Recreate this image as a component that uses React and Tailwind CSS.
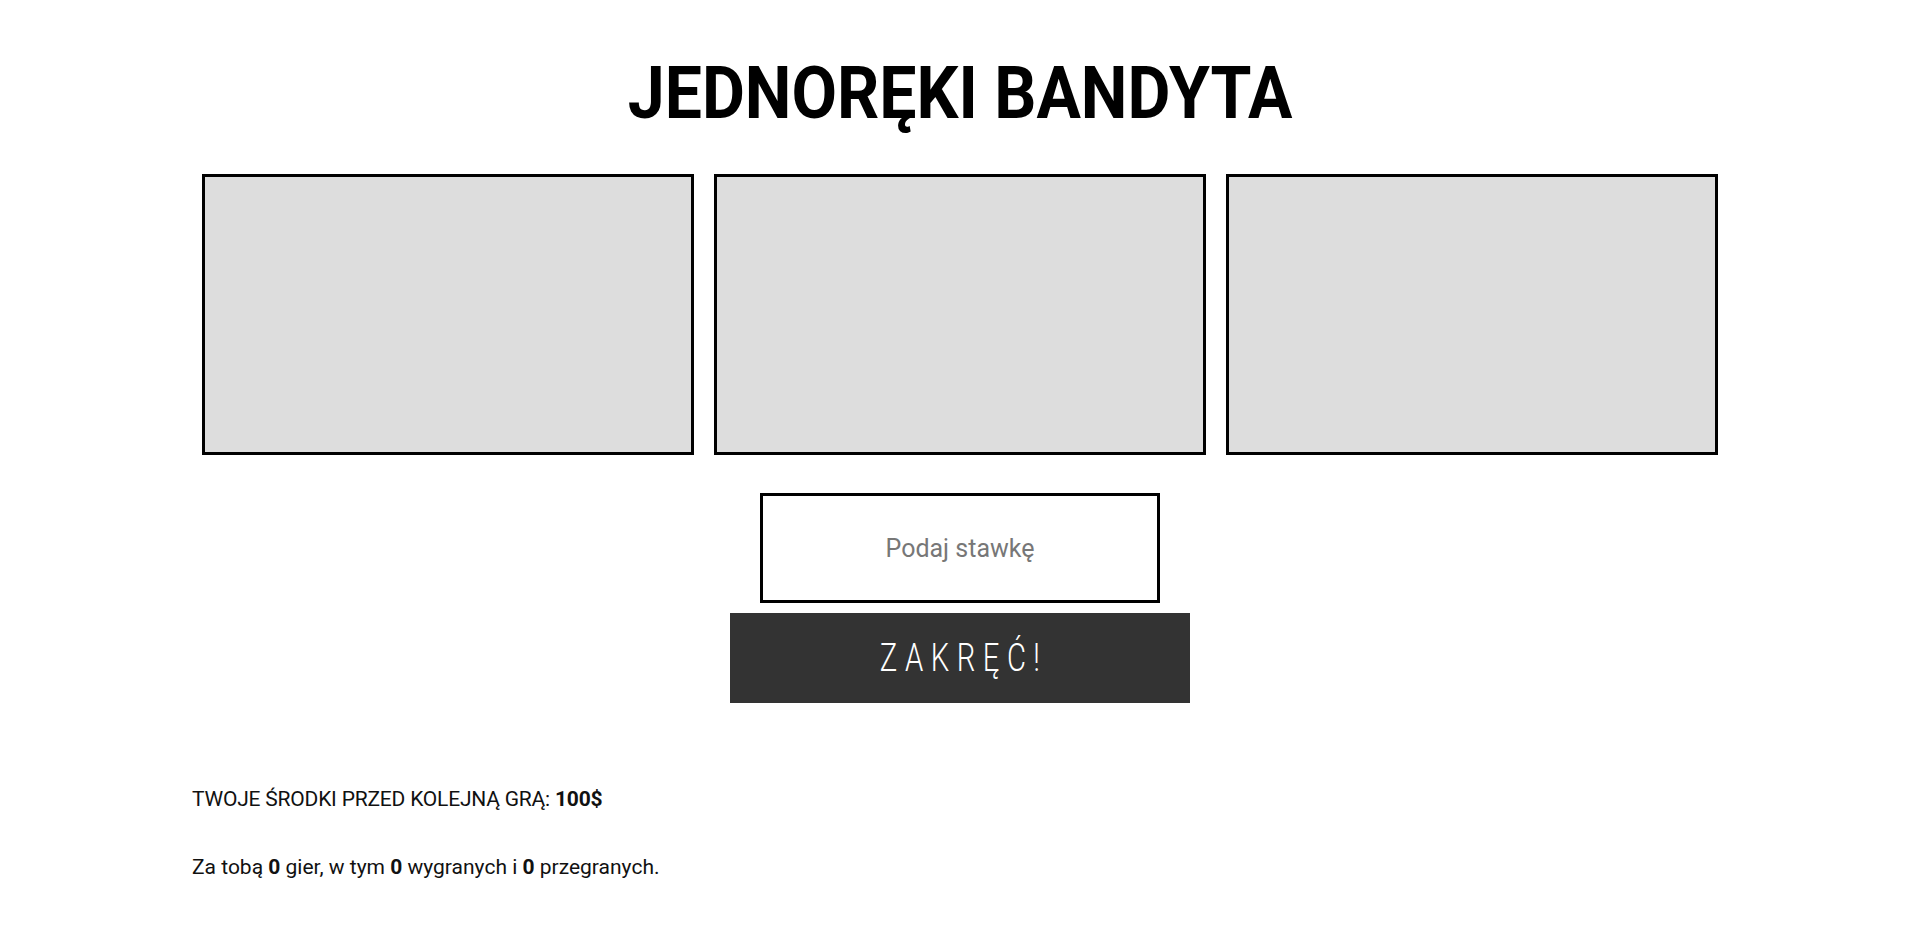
import React from "react";

export default function App() {
  const font = { fontFamily: "Roboto, 'Liberation Sans', sans-serif" };
  return (
    <div className="min-h-screen bg-white" style={font}>
      <div className="w-[1536px] mx-auto">
        <div className="pt-[53px] h-[174px] flex justify-center">
          <h1 className="text-[73px] leading-[80px] font-bold text-black inline-block h-[80px] scale-x-[0.905] origin-center whitespace-nowrap">
            JEDNORĘKI BANDYTA
          </h1>
        </div>
        <div className="flex">
          <div className="flex-1 mx-[10px] h-[281px] border-[3px] border-black bg-[#dddddd]" />
          <div className="flex-1 mx-[10px] h-[281px] border-[3px] border-black bg-[#dddddd]" />
          <div className="flex-1 mx-[10px] h-[281px] border-[3px] border-black bg-[#dddddd]" />
        </div>
        <div className="mt-[38px] flex flex-col items-center">
          <input
            type="text"
            placeholder="Podaj stawkę"
            className="w-[400px] h-[110px] border-[3px] border-black text-center text-[25px] text-black placeholder:text-[#777777] outline-none"
            style={font}
          />
          <button
            className="mt-[10px] w-[460px] h-[90px] bg-[#333333] text-white flex items-center justify-center"
            style={font}
          >
            <span className="inline-block text-[39px] leading-[46px] font-light tracking-[10px] pl-[10px] scale-x-[0.75] origin-center">
              ZAKRĘĆ!
            </span>
          </button>
        </div>
        <div className="mt-[82px] text-[21px] text-[#111111] leading-[28px]">
          <p className="tracking-[-0.2px]">
            TWOJE ŚRODKI PRZED KOLEJNĄ GRĄ: <span className="font-bold">100$</span>
          </p>
          <p className="mt-[40px]">
            Za tobą <span className="font-bold">0</span> gier, w tym{" "}
            <span className="font-bold">0</span> wygranych i{" "}
            <span className="font-bold">0</span> przegranych.
          </p>
        </div>
      </div>
    </div>
  );
}
